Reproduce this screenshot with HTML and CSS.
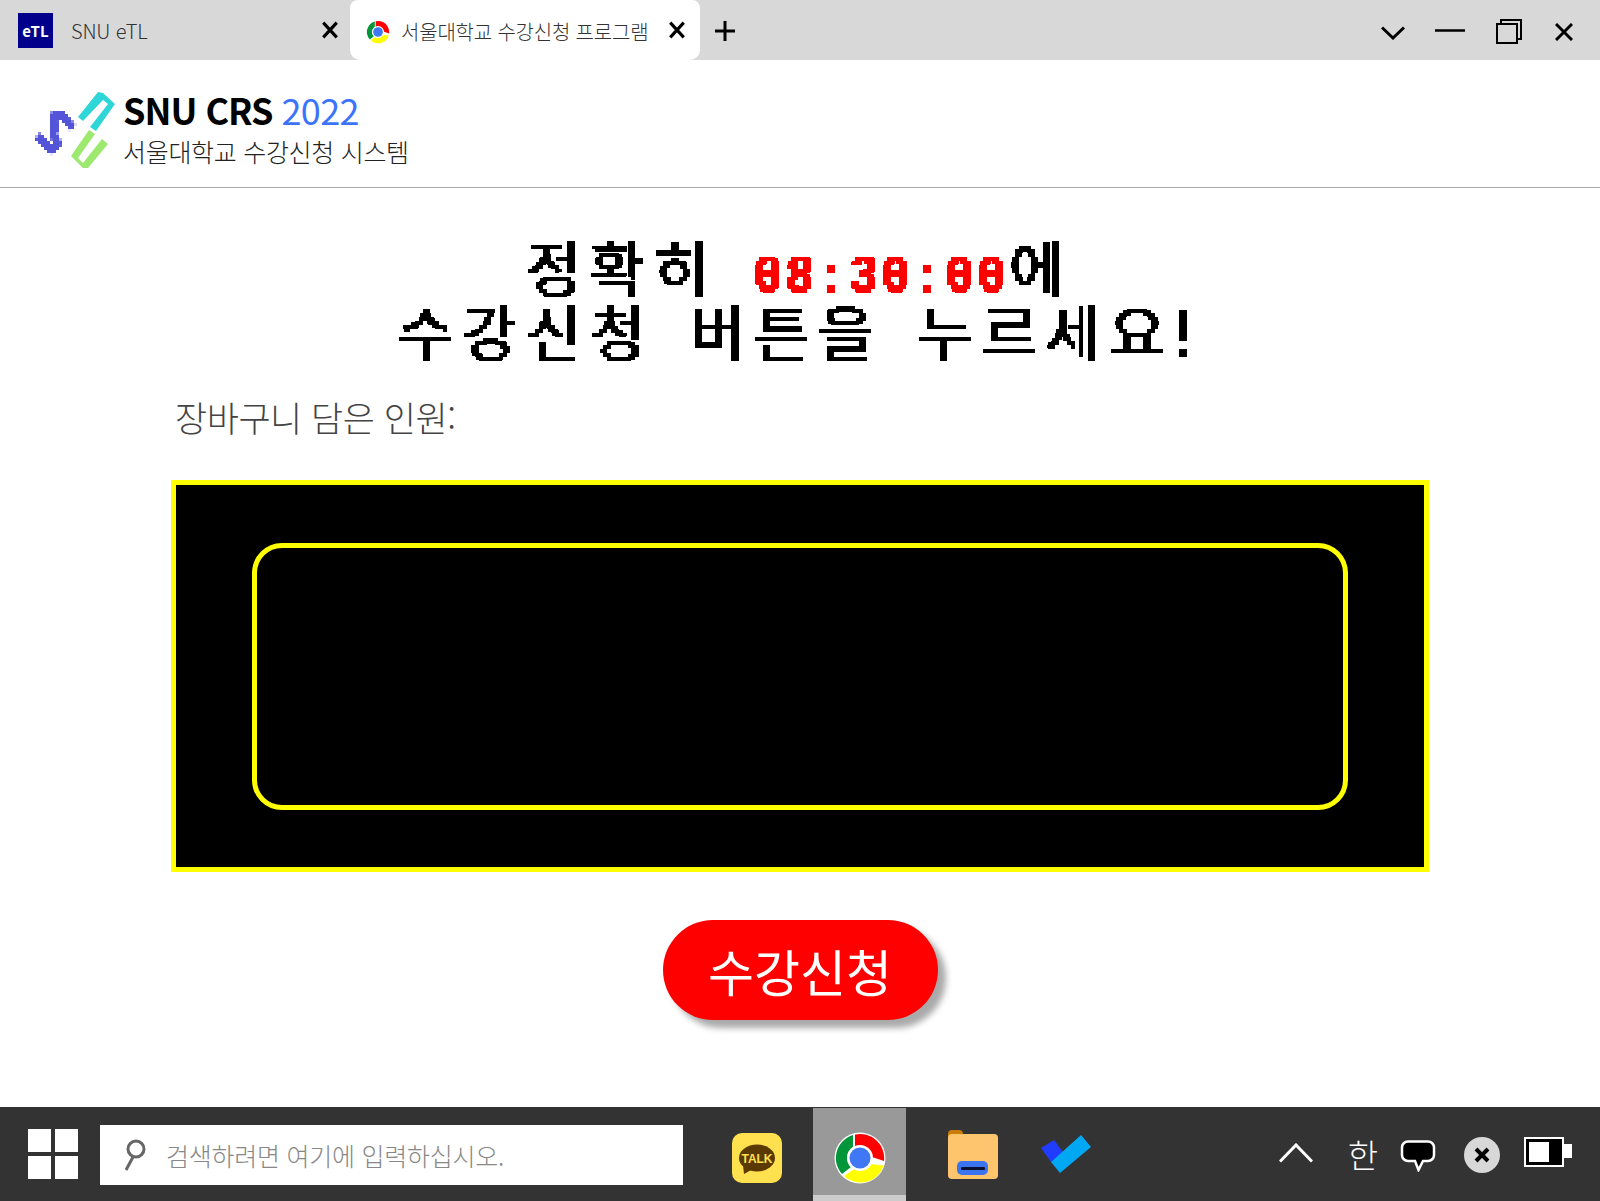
FILE: index.html
```html
<!DOCTYPE html>
<html lang="ko">
<head>
<meta charset="utf-8">
<title>서울대학교 수강신청 프로그램</title>
<link rel="stylesheet" href="styles.css">
</head>
<body>
<svg class="defs" width="0" height="0" aria-hidden="true">
  <defs>
    <filter id="bitmap" x="0" y="0" width="100%" height="100%" color-interpolation-filters="sRGB">
      <feMorphology in="SourceGraphic" operator="dilate" radius="1 0" result="thick"/>
      <feFlood x="0" y="0" width="2" height="2" flood-color="#000"/>
      <feComposite width="4" height="4"/>
      <feTile result="grid"/>
      <feComposite in="thick" in2="grid" operator="in"/>
      <feMorphology operator="dilate" radius="1"/>
      <feComponentTransfer>
        <feFuncA type="discrete" tableValues="0 0 1 1"/>
      </feComponentTransfer>
    </filter>
    <filter id="jag" filterUnits="userSpaceOnUse" x="30" y="100" width="60" height="60" color-interpolation-filters="sRGB">
      <feFlood x="30" y="100" width="1" height="1" flood-color="#000"/>
      <feComposite x="30" y="100" width="3" height="3"/>
      <feTile result="grid"/>
      <feComposite in="SourceGraphic" in2="grid" operator="in"/>
      <feMorphology operator="dilate" radius="1"/>
    </filter>
    <symbol id="chrome" viewBox="-26 -26 52 52">
      <circle r="25.5" fill="#fff"/>
      <path fill="#f00" d="M-5-23.4A24 24 0 0 1 24 3L12-1A12.500 12.500 0 0 0-5-11Z"/>
      <path fill="#ff0" d="M23.500 7.500A24 24 0 0 1-16 18L-6 11A13 13 0 0 0 11 6Z"/>
      <path fill="#009639" d="M-7-23A24 24 0 0 0-18 16L-9 9A13 13 0 0 1-7-11Z"/>
      <circle r="13" fill="#fff"/>
      <circle r="10.500" fill="#4077f5"/>
    </symbol>
  </defs>
</svg>

<div class="tabbar">
  <div class="tab tab-inactive">
    <span class="etl">eTL</span>
    <span class="tab-title">SNU eTL</span>
    <svg class="tab-x" viewBox="0 0 16 16"><path d="M2 1.500 14 14.500M14 1.500 2 14.500"/></svg>
  </div>
  <div class="tab tab-active">
    <svg class="favicon"><use href="#chrome"/></svg>
    <span class="tab-title">서울대학교 수강신청 프로그램</span>
    <svg class="tab-x" viewBox="0 0 16 16"><path d="M2 1.500 14 14.500M14 1.500 2 14.500"/></svg>
  </div>
  <svg class="plus" viewBox="0 0 20 20"><path d="M10 0V20M0 10H20"/></svg>
  <div class="win-controls">
    <svg class="win-chevron" viewBox="0 0 24 14"><path d="M1 1.500 12 12 23 1.500"/></svg>
    <svg class="win-min" viewBox="0 0 30 3"><path d="M0 1.500H30"/></svg>
    <svg class="win-restore" viewBox="0 0 26 25"><path d="M1 5H21V24H1ZM5 5V1H25V20H21"/></svg>
    <svg class="win-close" viewBox="0 0 18 18"><path d="M1 1 17 17M17 1 1 17"/></svg>
  </div>
</div>

<header class="site-header">
  <svg class="logo" viewBox="30 85 95 90">
    <polygon class="logo-cyan" points="78,117 98,92 103,93 115,104 96,131 90,127 108,104 103,100 83,121"/>
    <polygon class="logo-green" points="89,130 95,134 78,158 83,163 102,139 108,144 88,168 83,168 71,156"/>
    <polyline class="logo-purple" points="73,128 62,115 53,116 55,128 53,135 58,143 52,150 37,136"/>
  </svg>
  <div class="brand">
    <div class="brand-title">SNU CRS <span class="brand-year">2022</span></div>
    <div class="brand-sub">서울대학교 수강신청 시스템</div>
  </div>
</header>

<main class="page">
  <h1 class="headline">정확히 <span class="clock">08:30:00</span>에<br>수강신청 버튼을 누르세요!</h1>
  <p class="basket-label">장바구니 담은 인원:</p>
  <div class="screen">
    <div class="screen-inner"></div>
  </div>
  <button class="apply" type="button">수강신청</button>
</main>

<footer class="taskbar">
  <div class="start"><i></i><i></i><i></i><i></i></div>
  <div class="search">
    <svg class="search-icon" viewBox="0 0 24 32"><circle cx="13" cy="10" r="8"/><path d="M10 18 3 31"/></svg>
    <span class="search-text">검색하려면 여기에 입력하십시오.</span>
  </div>
  <div class="kakao">
    <svg viewBox="0 0 50 50"><rect width="50" height="50" rx="10" fill="#ffe14f"/><ellipse cx="25" cy="25" rx="18" ry="13.500" fill="#5a3a00"/><path d="M11 32 12 41 21 36Z" fill="#5a3a00"/><text x="25" y="30" class="kakao-text">TALK</text></svg>
  </div>
  <div class="tile-active"><svg class="tile-chrome"><use href="#chrome"/></svg></div>
  <svg class="folder" viewBox="0 0 50 49">
    <rect x="0" y="0" width="15" height="12" rx="4" fill="#c97d06"/>
    <rect x="0" y="4" width="50" height="45" rx="4" fill="#ffc46e"/>
    <rect x="9" y="31" width="31" height="14" rx="5" fill="#3b74f0"/>
    <rect x="13" y="37" width="24" height="3" rx="1" fill="#0a1030"/>
  </svg>
  <svg class="todo" viewBox="0 0 50 38">
    <polygon points="0,13 13,5 22,17 10,27" fill="#1f3cff"/>
    <polygon points="10,27 40,0 50,12 19,38" fill="#00a8f4"/>
  </svg>
  <div class="tray">
    <svg class="tray-up" viewBox="0 0 34 20"><path d="M1 18.500 17 2 33 18.500"/></svg>
    <span class="ime">한</span>
    <svg class="balloon" viewBox="0 0 36 32"><path d="M8 1.500H28A6 6 0 0 1 34 7.500V15A6 6 0 0 1 28 21H23L18.500 30 15 21H8A6 6 0 0 1 2 15V7.500A6 6 0 0 1 8 1.500Z"/></svg>
    <svg class="tray-close" viewBox="0 0 36 36"><circle cx="18" cy="18" r="18" fill="#d8d8d8"/><path d="M12 12 24 24M24 12 12 24"/></svg>
    <svg class="battery" viewBox="0 0 48 30"><rect x="1" y="1" width="38" height="28" fill="#000" stroke="#fff" stroke-width="2"/><rect x="5" y="5" width="20" height="20" fill="#fff"/><rect x="40" y="7" width="8" height="14" fill="#fff"/></svg>
  </div>
</footer>
</body>
</html>
```

FILE: styles.css
```css
* { box-sizing: border-box; }

html, body { margin: 0; padding: 0; }

body {
  width: 1600px;
  height: 1201px;
  display: flex;
  flex-direction: column;
  overflow: hidden;
  background: #fff;
  font-family: "Noto Sans CJK KR", "Noto Sans", sans-serif;
  color: #000;
}

.defs { position: absolute; }

/* browser tabs */
.tabbar {
  height: 60px;
  flex: none;
  display: flex;
  align-items: stretch;
  background: #d8d8d8;
}
.tab { display: flex; align-items: center; position: relative; }
.tab-inactive { width: 350px; padding-left: 18px; }
.tab-active {
  width: 350px;
  padding-left: 16px;
  background: #fff;
  border-radius: 8px 8px 10px 10px;
}
.etl {
  width: 35px;
  height: 35px;
  margin-top: 1px;
  background: #00008b;
  color: #fff;
  font-size: 15px;
  font-weight: 700;
  line-height: 35px;
  text-align: center;
}
.tab-title { font-size: 20px; line-height: 28px; color: #333; font-weight: 300; letter-spacing: -0.2px; }
.etl + .tab-title { margin-left: 18px; margin-top: 1px; }
.favicon { width: 24px; height: 24px; margin-right: 11px; margin-top: 4px; flex: none; }
.favicon + .tab-title { margin-top: 4px; white-space: nowrap; }
.tab-x {
  width: 18px;
  height: 18px;
  margin-left: auto;
  margin-right: 11px;
  margin-bottom: 1px;
  fill: none;
  stroke: #000;
  stroke-width: 2.800;
}
.tab-active .tab-x { margin-left: auto; margin-right: 14px; }
.plus {
  width: 20px;
  height: 20px;
  margin: 21px 0 0 15px;
  fill: none;
  stroke: #000;
  stroke-width: 3;
}
.win-controls { margin-left: auto; display: flex; align-items: flex-start; }
.win-controls svg { display: block; fill: none; stroke: #000; flex: none; }
.win-chevron { width: 24px; height: 14px; margin: 26px 0 0 0; stroke-width: 3; }
.win-min { width: 30px; height: 3px; margin: 29px 0 0 30px; stroke-width: 2.500; }
.win-restore { width: 26px; height: 25px; margin: 19px 0 0 31px; stroke-width: 2; }
.win-close { width: 18px; height: 18px; margin: 23px 27px 0 33px; stroke-width: 3; }

/* site header */
.site-header {
  height: 128px;
  flex: none;
  display: flex;
  align-items: flex-start;
  border-bottom: 1px solid #aaa;
}
.logo { width: 95px; height: 90px; margin: 25px 0 0 30px; flex: none; overflow: visible; }
.logo-cyan { fill: #2fd6d8; }
.logo-green { fill: #9de86f; }
.logo-purple {
  fill: none;
  stroke: #5454d8;
  stroke-width: 8;
  stroke-linejoin: round;
  filter: url(#jag);
}
.brand { margin: 24px 0 0 -2px; }
.brand-title { font-size: 36px; line-height: 50px; font-weight: 700; white-space: nowrap; letter-spacing: -1px; }
.brand-year { color: #3b74fb; font-weight: 400; letter-spacing: -0.700px; }
.brand-sub { font-size: 25px; line-height: 32px; margin-top: 1px; color: #222; font-weight: 300; white-space: nowrap; letter-spacing: -0.3px; }

/* main */
.page {
  flex: 1;
  display: flex;
  flex-direction: column;
  padding: 0 171px;
}
.headline {
  margin: 46px -171px 0;
  font-size: 60px;
  line-height: 64px;
  font-weight: 400;
  letter-spacing: 8.800px;
  word-spacing: 10px;
  text-align: center;
  filter: url(#bitmap);
}
.clock {
  display: inline-block;
  width: 256px;
  color: #f00;
  font-family: "Liberation Mono", monospace;
  font-size: 54px;
  line-height: 0;
  font-weight: 700;
  letter-spacing: 5.200px;
  word-spacing: 0;
  white-space: nowrap;
  text-align: left;
  transform: scaleX(0.85);
  transform-origin: left center;
}
.basket-label {
  margin: 33px 0 0 4px;
  font-size: 35px;
  line-height: 44px;
  font-weight: 300;
  color: #444;
  letter-spacing: -0.500px;
}
.screen {
  margin-top: 41px;
  height: 392px;
  padding: 58px 76px 57px;
  background: #000;
  border: 5px solid #ff0;
}
.screen-inner {
  height: 100%;
  border: 5px solid #ff0;
  border-radius: 30px;
}
.apply {
  align-self: center;
  width: 275px;
  height: 100px;
  margin-top: 48px;
  border: 0;
  border-radius: 50px;
  background: #f00;
  color: #fff;
  font-family: inherit;
  font-size: 50px;
  line-height: 60px;
  box-shadow: 8px 8px 6px #aaa;
}

/* taskbar */
.taskbar {
  height: 94px;
  flex: none;
  display: flex;
  align-items: flex-start;
  background: #333;
}
.start {
  width: 50px;
  height: 50px;
  margin: 22px 0 0 28px;
  flex: none;
  display: grid;
  grid-template-columns: 1fr 1fr;
  grid-template-rows: 1fr 1fr;
  gap: 4px;
}
.start i { background: #fff; }
.search {
  width: 583px;
  height: 60px;
  margin: 18px 0 0 22px;
  flex: none;
  display: flex;
  align-items: center;
  background: #fff;
}
.search-icon {
  width: 24px;
  height: 32px;
  margin-left: 23px;
  fill: none;
  stroke: #666;
  stroke-width: 3;
  flex: none;
}
.search-text { margin-left: 19px; font-size: 25px; line-height: 34px; color: #888; font-weight: 300; white-space: nowrap; letter-spacing: -0.250px; }
.kakao { width: 50px; height: 50px; margin: 26px 0 0 49px; flex: none; }
.kakao svg { display: block; width: 50px; height: 50px; }
.kakao-text {
  font-family: "Liberation Sans", sans-serif;
  font-size: 12px;
  font-weight: 700;
  fill: #ffe14f;
  text-anchor: middle;
}
.tile-active {
  width: 93px;
  height: 93px;
  margin: 1px 0 0 31px;
  flex: none;
  display: flex;
  justify-content: center;
  align-items: flex-start;
  background: #999;
  border-bottom: 6px solid #ccc;
}
.tile-chrome { width: 52px; height: 52px; margin-top: 24px; }
.folder { width: 50px; height: 49px; margin: 23px 0 0 42px; flex: none; }
.todo { width: 50px; height: 38px; margin: 28px 0 0 43px; flex: none; }
.tray { margin-left: auto; display: flex; align-items: flex-start; }
.tray > * { flex: none; display: block; }
.tray-up { width: 34px; height: 20px; margin: 36px 0 0 0; fill: none; stroke: #fff; stroke-width: 3; }
.ime { width: 34px; margin: 25px 0 0 33px; font-size: 33px; line-height: 44px; color: #fff; font-weight: 300; text-align: center; }
.balloon { width: 36px; height: 32px; margin: 33px 0 0 20px; fill: #000; stroke: #fff; stroke-width: 2.500; }
.tray-close { width: 36px; height: 36px; margin: 30px 0 0 28px; fill: none; }
.tray-close path { fill: none; stroke: #000; stroke-width: 4; }
.battery { width: 48px; height: 30px; margin: 30px 28px 0 24px; }
```
